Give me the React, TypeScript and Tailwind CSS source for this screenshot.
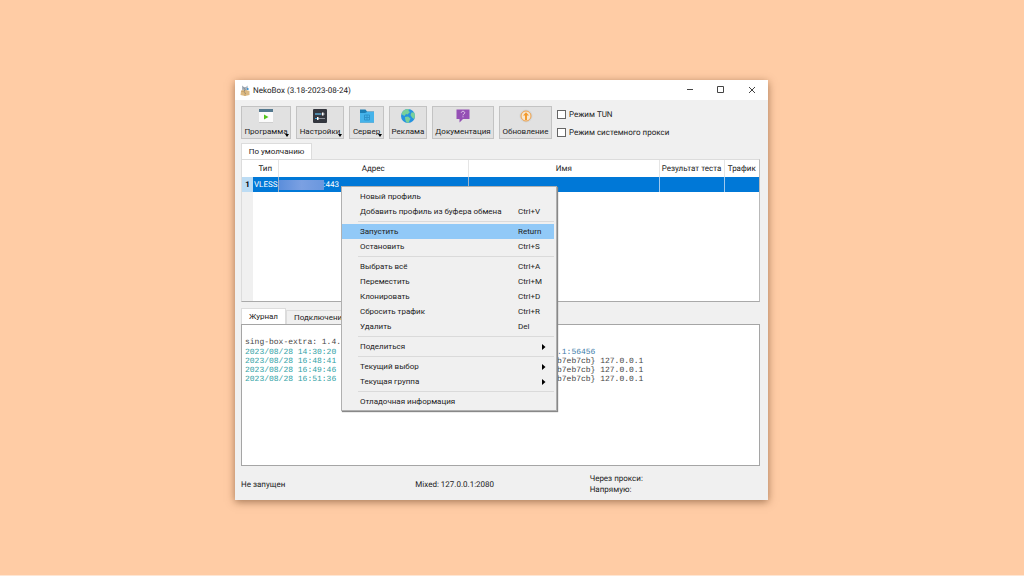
import React from "react";

function ProgramIcon() {
  return (
    <svg viewBox="0 0 16 16" className="w-4 h-4">
      <rect x="1" y="2" width="14" height="12" fill="#fbfbfb" />
      <rect x="1" y="1" width="14" height="3" fill="#54798f" />
      <path d="M6 6.5v5l4.5-2.5z" fill="#52c41a" />
      <path d="M1 14.5h14" stroke="#cfcfcf" />
    </svg>
  );
}

function SettingsIcon() {
  return (
    <svg viewBox="0 0 16 16" className="w-4 h-4">
      <rect x="1" y="1" width="14" height="14" rx="1" fill="#34373f" />
      <path d="M3 6h10M3 10.5h10" stroke="#8d9199" />
      <path d="M3 6h6M3 10.5h2" stroke="#3daee9" />
      <rect x="10" y="4.5" width="1.5" height="3" fill="#fff" />
      <rect x="5" y="9" width="1.5" height="3" fill="#fff" />
    </svg>
  );
}

function ServerIcon() {
  return (
    <svg viewBox="0 0 16 16" className="w-4 h-4">
      <path d="M1 1.5h5.5l1.500 2h7v11H1z" fill="#1d7fb5" />
      <path d="M1 5h5l2-1h7v10.5H1z" fill="#45b3ea" />
      <path d="M5.5 7h5v5h-5zM5.5 9.5h5M8 7v5" fill="none" stroke="#2f93ca" />
    </svg>
  );
}

function GlobeIcon() {
  return (
    <svg viewBox="0 0 16 16" className="w-4 h-4">
      <circle cx="8" cy="8" r="7" fill="#2593e0" />
      <path d="M2 4.5C4 1.500 7 .8 9 1.200L8.500 3 10 4 7.500 6.500 6 6 4.500 8 2 6.500z" fill="#79d09b" />
      <path d="M5 9l3-.5 2.500 2L8.500 15C6 15 5 12 5 9z" fill="#79d09b" />
      <path d="M11.5 4.5l2.500 0C15.500 7 15 9 14 11l-2-1.500-1.500-2.500z" fill="#79d09b" />
    </svg>
  );
}

function DocsIcon() {
  return (
    <svg viewBox="0 0 16 16" className="w-4 h-4">
      <path d="M1.5 1.5h13v9.5H8l-3.500 3.500V11h-3z" fill="#9550b5" />
      <path d="M6.3 4.8c0-2 3.400-2 3.400 0 0 1.300-1.700 1.200-1.700 2.500M8 8.300v1" fill="none" stroke="#e5d0ef" />
    </svg>
  );
}

function UpdateIcon() {
  return (
    <svg viewBox="0 0 16 16" className="w-4 h-4">
      <circle cx="8" cy="8" r="6.5" fill="#d3d5d7" />
      <circle cx="8" cy="8" r="5" fill="#f6e6d0" stroke="#f0a24a" />
      <path d="M8 4.3l3 3.200H9V12H7V7.500H5z" fill="#f39a2d" />
    </svg>
  );
}

function CatIcon() {
  return (
    <svg viewBox="0 0 10 11" className="w-[10px] h-[11px]">
      <path d="M2 .5l2 1.500h2L7.500.5 8 4 6.500 6h-4L2 4z" fill="#a9b3bd" />
      <path d="M1 6l3-1.500L9.500 6v4L5 11 .5 10z" fill="#dcb982" />
      <path d="M3.5 2.5l1.500 2-1 2.500 2 2" fill="none" stroke="#7f8790" />
      <path d="M1 6l4 1v4" fill="none" stroke="#c9a468" />
      <path d="M7 3h1.500v2H7z" fill="#3f97d6" />
    </svg>
  );
}

const toolbar = [
  { label: "Программа", icon: <ProgramIcon />, width: "w-[50px]", menu: true },
  { label: "Настройки", icon: <SettingsIcon />, width: "w-12", menu: true },
  { label: "Сервер", icon: <ServerIcon />, width: "w-[35px]", menu: true },
  { label: "Реклама", icon: <GlobeIcon />, width: "w-[38px]", menu: false },
  { label: "Документация", icon: <DocsIcon />, width: "w-[62px]", menu: false },
  { label: "Обновление", icon: <UpdateIcon />, width: "w-[53px]", menu: false },
];

type Item = { label: string; keys?: string; sub?: boolean; active?: boolean };

const menuGroups: Item[][] = [
  [{ label: "Новый профиль" }, { label: "Добавить профиль из буфера обмена", keys: "Ctrl+V" }],
  [
    { label: "Запустить", keys: "Return", active: true },
    { label: "Остановить", keys: "Ctrl+S" },
  ],
  [
    { label: "Выбрать всё", keys: "Ctrl+A" },
    { label: "Переместить", keys: "Ctrl+M" },
    { label: "Клонировать", keys: "Ctrl+D" },
    { label: "Сбросить трафик", keys: "Ctrl+R" },
    { label: "Удалить", keys: "Del" },
  ],
  [{ label: "Поделиться", sub: true }],
  [
    { label: "Текущий выбор", sub: true },
    { label: "Текущая группа", sub: true },
  ],
  [{ label: "Отладочная информация" }],
];

const logLines = [
  { time: "2023/08/28 14:30:20", tail: ".1:56456", color: "text-[#3c7ba8]" },
  { time: "2023/08/28 16:48:41", tail: "b7eb7cb} 127.0.0.1", color: "text-[#444]" },
  { time: "2023/08/28 16:49:46", tail: "b7eb7cb} 127.0.0.1", color: "text-[#444]" },
  { time: "2023/08/28 16:51:36", tail: "b7eb7cb} 127.0.0.1", color: "text-[#444]" },
];

function TitleBar() {
  return (
    <header className="flex items-center h-5 bg-white pl-[5px]">
      <CatIcon />
      <h1 className="ml-[3px] flex-1">NekoBox (3.18-2023-08-24)</h1>
      <button aria-label="Свернуть" className="w-8 h-5 flex items-center justify-center">
        <svg viewBox="0 0 8 8" className="w-2 h-2">
          <path d="M1 3.5h6" stroke="#444" />
        </svg>
      </button>
      <button aria-label="Развернуть" className="w-[30px] h-5 flex items-center justify-center">
        <svg viewBox="0 0 8 8" className="w-2 h-2">
          <path d="M.5.5h6v6h-6z" fill="none" stroke="#444" />
        </svg>
      </button>
      <button aria-label="Закрыть" className="w-8 h-5 flex items-center justify-center">
        <svg viewBox="0 0 8 8" className="w-2 h-2">
          <path d="M1 1l6 6M7 1l-6 6" stroke="#444" />
        </svg>
      </button>
    </header>
  );
}

function Toolbar() {
  return (
    <div className="flex gap-[5px] pt-[6px] pl-[6px]">
      {toolbar.map((b) => (
        <button
          key={b.label}
          className={`${b.width} relative h-[33px] shrink-0 flex flex-col items-center gap-[2px] pt-[1px] bg-[#e1e1e1] border border-[#c3c3c3] whitespace-nowrap`}
        >
          {b.icon}
          <span className="leading-[11px]">{b.label}</span>
          {b.menu && (
            <svg viewBox="0 0 4 3" className="absolute right-[1px] bottom-[1px] w-1 h-[3px]">
              <path d="M0 0h4L2 3z" fill="#000" />
            </svg>
          )}
        </button>
      ))}
      <div className="flex flex-col gap-[6px] pt-[2px] whitespace-nowrap">
        <label className="flex items-center gap-[3px] h-3">
          <input type="checkbox" className="appearance-none w-[9px] h-[9px] bg-white border border-[#666]" />
          Режим TUN
        </label>
        <label className="flex items-center gap-[3px] h-3">
          <input type="checkbox" className="appearance-none w-[9px] h-[9px] bg-white border border-[#666]" />
          Режим системного прокси
        </label>
      </div>
    </div>
  );
}

function ProfileTable() {
  return (
    <div className="h-[143px] bg-white border border-[#dcdcdc] border-b-[#a9a9a9] border-r-[#b9b9b9]">
      <div className="h-full bg-linear-to-r from-[#f0f0f0] from-[11px] to-white to-[11px]">
        <table className="w-full table-fixed border-collapse">
          <colgroup>
            <col className="w-[11px]" />
            <col className="w-[25px]" />
            <col />
            <col />
            <col className="w-[65px]" />
            <col className="w-[35px]" />
          </colgroup>
          <thead>
            <tr className="h-[17px] bg-white whitespace-nowrap">
              <th></th>
              <th className="font-normal border-r border-[#e5e5e5]">Тип</th>
              <th className="font-normal border-r border-[#e5e5e5]">Адрес</th>
              <th className="font-normal border-r border-[#e5e5e5]">Имя</th>
              <th className="font-normal border-r border-[#e5e5e5]">Результат теста</th>
              <th className="font-normal">Трафик</th>
            </tr>
          </thead>
          <tbody>
            <tr className="h-[15px] bg-[#0078d7] text-white">
              <th className="bg-[#bcdcf4] text-black font-bold">1</th>
              <td className="pl-[1px] border-r border-[#9fb4c8]">VLESS</td>
              <td className="border-r border-[#9fb4c8]">
                <div className="flex items-center">
                  <span className="w-[45px] h-[10px] bg-linear-to-r from-[#5b8edb] via-[#7ba0e2] to-[#6a97de]"></span>
                  :443
                </div>
              </td>
              <td className="border-r border-[#9fc9ee]"></td>
              <td className="border-r border-[#9fc9ee]"></td>
              <td></td>
            </tr>
          </tbody>
        </table>
      </div>
    </div>
  );
}

function Log() {
  return (
    <div className="h-[142px] bg-white border border-[#a5a5a5] pt-[13px] pl-[3px] font-['Liberation_Mono',monospace] leading-[9px] whitespace-pre overflow-hidden text-[#444]">
      <p className="mb-px">sing-box-extra: 1.4.</p>
      {logLines.map((l) => (
        <p key={l.time} className="flex">
          <span className="w-[312px] text-[#2f9fa5]">{l.time}</span>
          <span className={l.color}>{l.tail}</span>
        </p>
      ))}
    </div>
  );
}

function ContextMenu() {
  return (
    <div
      role="menu"
      className="absolute left-[106px] top-[106px] w-[216px] pt-[2px] pb-[1px] pr-[2px] bg-[#f0f0f0] border border-[#b0b0b0] shadow-[1px_1px_1px_#888]"
    >
      {menuGroups.map((group, i) => (
        <div key={i}>
          {i > 0 && (
            <div className="h-[5px] pt-[2px] ml-4">
              <hr className="border-[#dadada]" />
            </div>
          )}
          {group.map((item) => (
            <button
              key={item.label}
              role="menuitem"
              className={`${item.active ? "bg-[#91c9f7]" : ""} flex items-center w-full h-[15px] pl-[18px] pr-2 text-left whitespace-nowrap`}
            >
              <span className="flex-1">{item.label}</span>
              {item.keys && <span className="w-7">{item.keys}</span>}
              {item.sub && (
                <svg viewBox="0 0 4 6" className="w-1 h-[6px]">
                  <path d="M0 0l3.5 3L0 6z" fill="#000" />
                </svg>
              )}
            </button>
          ))}
        </div>
      ))}
    </div>
  );
}

export default function App() {
  return (
    <div className="min-h-screen bg-[#ffcca5] border-b border-[#ffe6d3] pt-20 pb-[75px] pl-[22.95%] pr-[25%] font-['Roboto','Noto_Sans',sans-serif] text-[8px] leading-[11px] text-[#222] [text-rendering:geometricPrecision]">
      <main className="relative flex flex-col bg-[#f0f0f0] shadow-[0_2px_8px_rgba(90,50,20,0.55)]">
        <TitleBar />
        <Toolbar />
        <section className="pt-1 pl-[6px] pr-2">
          <button className="block w-[71px] h-4 bg-white border border-b-0 border-[#dcdcdc]">
            По умолчанию
          </button>
          <ProfileTable />
        </section>
        <section className="pt-[6px] pl-[6px] pr-2">
          <div className="flex items-end">
            <button className="w-[45px] h-4 bg-white border border-b-0 border-[#dcdcdc]">Журнал</button>
            <button className="h-[14px] px-[7px] border border-b-0 border-[#dcdcdc]">Подключения</button>
          </div>
          <Log />
        </section>
        <footer className="grid grid-cols-3 items-center h-[34px] pt-[2px] pl-[6px] pr-1">
          <span>Не запущен</span>
          <span>Mixed: 127.0.0.1:2080</span>
          <div>
            <p>Через прокси:</p>
            <p>Напрямую:</p>
          </div>
        </footer>
        <ContextMenu />
      </main>
    </div>
  );
}
